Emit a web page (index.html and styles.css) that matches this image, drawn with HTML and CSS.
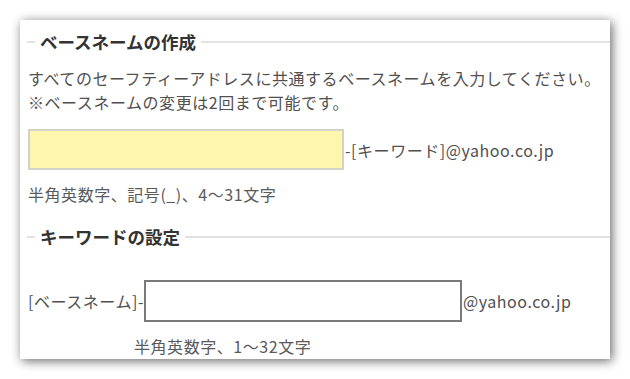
FILE: index.html
```html
<!DOCTYPE html>
<html lang="ja">
<head>
  <meta charset="UTF-8" />
  <meta name="viewport" content="width=device-width, initial-scale=1.0"/>
  <title>セーフティーアドレス</title>
  <link rel="stylesheet" href="styles.css">
</head>
<body>
  <div class="card">
    <h2 class="legend">ベースネームの作成</h2>
    <p class="lead">すべてのセーフティーアドレスに共通するベースネームを入力してください。<br>※ベースネームの変更は2回まで可能です。</p>
    <div class="row">
      <input type="text" class="field field-base">
      <span class="suffix">-[キーワード]@yahoo.co.jp</span>
    </div>
    <p class="hint">半角英数字、記号(_)、4〜31文字</p>

    <h2 class="legend legend-key">キーワードの設定</h2>
    <div class="row row-key">
      <span class="prefix">[ベースネーム]-</span>
      <input type="text" class="field field-key">
      <span class="suffix">@yahoo.co.jp</span>
    </div>
    <p class="hint hint-key">半角英数字、1〜32文字</p>
  </div>
</body>
</html>
```

FILE: styles.css
```css
:root {
  --text: #505050;
  --title: #333;
  --line: #e2e2e2;
  --yellow: #fff6ad;
}

body {
  margin: 0;
  padding: 20px;
  background: #fff;
  font-family: "Noto Sans CJK JP", "Liberation Sans", sans-serif;
  font-size: 16px;
  color: var(--text);
}

.card {
  width: 582px;
  height: 339px;
  padding: 0 0 0 8px;
  background: #fff;
  box-shadow: 2px 2px 10px rgba(0, 0, 0, 0.6);
  overflow: hidden;
}

.legend {
  display: flex;
  align-items: center;
  gap: 5px;
  margin: 10px 0 0 -1px;
  font-size: 17.5px;
  line-height: 24px;
  font-weight: bold;
  color: var(--title);
}

.legend::before,
.legend::after {
  content: "";
  height: 2px;
  background: var(--line);
}

.legend::before {
  width: 8px;
}

.legend::after {
  flex: 1;
}

.lead,
.row,
.hint {
  letter-spacing: 0.55px;
}

.lead {
  margin: 12px 0 0;
  line-height: 24px;
}

.row {
  display: flex;
  align-items: center;
  margin-top: 15px;
}

.field {
  box-sizing: border-box;
  margin: 0;
  font: inherit;
  background: #fff;
}

.field-base {
  width: 316px;
  height: 41px;
  background: var(--yellow);
  border: 2px solid #d2d2c6;
}

.hint {
  margin: 12px 0 0;
  line-height: 24px;
  color: #5a5a5a;
}

.legend-key {
  margin-top: 19px;
}

.row-key {
  margin-top: 31px;
}

.field-key {
  width: 318px;
  height: 42px;
  border: 2px solid #7a7a7a;
}

.suffix {
  margin-left: 1px;
}

.hint-key {
  margin: 12px 0 0 106px;
}
```
